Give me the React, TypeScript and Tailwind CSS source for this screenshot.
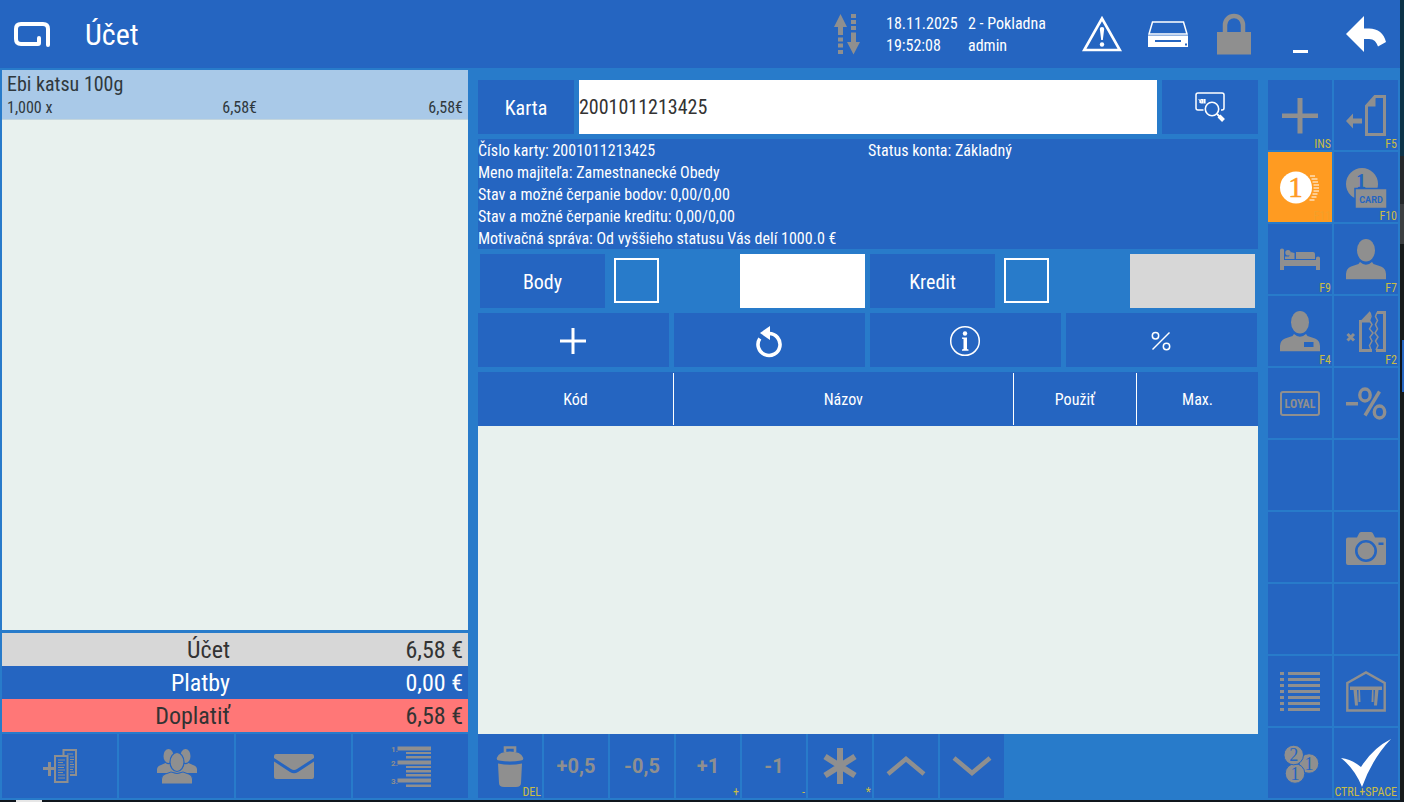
import React, { useState } from "react";
import clsx from "clsx";

const SERIF = "'Liberation Serif', serif";
const SANS = "Roboto, sans-serif";
const CONDENSED = "'Roboto Condensed', Roboto, sans-serif";
const PANEL = "#2565c1";

type IconProps = {
  w?: number;
  h?: number;
  children: React.ReactNode;
};

const Icon = ({ w = 40, h = 40, children }: IconProps) => (
  <svg
    width={w}
    height={h}
    viewBox={`0 0 ${w} ${h}`}
    fill="currentColor"
    className="shrink-0 overflow-visible"
    aria-hidden="true"
  >
    {children}
  </svg>
);

/* ---------- header icons ---------- */

const LogoIcon = () => (
  <Icon w={36} h={25}>
    <path
      d="M34 23V7q0-5-5-5H7Q2 2 2 7v10q0 5 5 5h17q1 0 1-1v-5"
      fill="none"
      stroke="currentColor"
      strokeWidth="4"
      strokeLinecap="round"
      strokeLinejoin="round"
    />
  </Icon>
);

const TransferIcon = () => (
  <Icon w={26} h={41}>
    <path d="M6.500 0 13 13H9v8H4v-8H0zM4 23.500h5v4H4zM4 29.500h5v4H4zM4 36h5v4H4z" />
    <path d="M17 0h5v4h-5zM17 6h5v4h-5zM17 12h5v4h-5zM17 18.500h5V28h4l-6.500 12.500L13 28h4z" />
  </Icon>
);

const WarningIcon = () => (
  <Icon w={40} h={36}>
    <path d="M20 2.500 37.800 34H2.200z" fill="none" stroke="currentColor" strokeWidth="2.600" />
    <path d="M17.800 13q0-2 2.200-2t2.200 2L20.800 24h-1.600z" />
    <circle cx="20" cy="28.500" r="2.200" />
  </Icon>
);

const DriveIcon = () => (
  <Icon w={40} h={26}>
    <path d="M4.500 1h31L39 13H1z" fill="none" stroke="currentColor" strokeWidth="1.500" />
    <path d="M0 14.500h40V26H0z" />
    <path d="M7 20h26" stroke={PANEL} strokeWidth="2" />
    <path d="M37 22.500h2v2h-2z" fill={PANEL} />
  </Icon>
);

const LockIcon = () => (
  <Icon w={34} h={41}>
    <path d="M0 18h34v22.500H0z" />
    <path d="M8 19v-8a9 9 0 0 1 18 0v8" fill="none" stroke="currentColor" strokeWidth="4.500" />
  </Icon>
);

const MinimizeIcon = () => (
  <Icon w={16} h={36}>
    <path d="M1 34h15v3H1z" />
  </Icon>
);

const BackIcon = () => (
  <Icon w={40} h={36}>
    <path d="M0 18 18 0v12.500h5c9 0 15 5 17 13.500l-8 4.500c-1.500-4.500-4-7.500-9-7.500h-5V36z" />
  </Icon>
);

/* ---------- right column icons ---------- */

const PlusIcon = () => (
  <Icon>
    <path d="M17.500 3h5v15.500H38v4.500H22.500v15.500h-5V23H2v-4.500h15.500z" />
  </Icon>
);

const DocBackIcon = () => (
  <Icon>
    <path d="M0 26l7-7.500v5h9v5H7v5z" />
    <path d="M20.500 11 29 1.500h9.500v38h-18z" fill="none" stroke="currentColor" strokeWidth="3" />
    <path d="M19 11.500 29.500 0v11.500z" />
  </Icon>
);

const CoinIcon = () => (
  <Icon>
    <circle cx="16" cy="20.500" r="16" />
    <text x="15.500" y="30" fontSize="29" fontFamily={SERIF} textAnchor="middle" fill="#ff9b21" stroke="#ff9b21" strokeWidth="0.600">
      1
    </text>
    <path
      d="M30 9h5M31.500 12h6M32.500 15h5.500M33.500 18h5.500M33.500 21h5.500M33.500 24h5.500M32.500 27h5M31.500 30h5M29.500 33h5"
      stroke="currentColor"
      strokeWidth="1"
    />
  </Icon>
);

const CoinCardIcon = () => (
  <Icon>
    <circle cx="16" cy="17" r="16" />
    <text x="15" y="20.500" fontSize="20" fontWeight="700" fontFamily={SERIF} textAnchor="middle" fill={PANEL}>
      1
    </text>
    <path d="M9 21.500h32v20H9z" stroke={PANEL} strokeWidth="1.500" />
    <text x="25" y="35.500" fontSize="9" fontWeight="700" fontFamily={SANS} textAnchor="middle" fill={PANEL}>
      CARD
    </text>
  </Icon>
);

const BedIcon = () => (
  <Icon>
    <path d="M0 11q0-1.500 2-1.500t2 1.500v10h32v-2q0-1.500 2-1.500t2 1.500v12h-4v-4H4v4H0z" />
    <circle cx="8" cy="13.800" r="2.700" />
    <path d="M5 17.500h4l1.500-4.500 4 1v6H5zM16 13h17q2 0 2 2v5H16z" />
  </Icon>
);

const PersonIcon = ({ badge = false }: { badge?: boolean }) => (
  <Icon>
    <ellipse cx="20" cy="11.300" rx="9" ry="11.300" />
    <path d="M0 40.300V35q0-5.500 5-7.500l7.500-2.500 1.500-2q6 5.500 12 0l1.500 2 7.500 2.500q5 2 5 7.500v5.300z" />
    {badge && <path d="M24 31h9.500v5H24z" fill={PANEL} />}
  </Icon>
);

const TornDocIcon = () => (
  <Icon>
    <path d="m1.500 23 6.500 6.500m0-6.500-6.500 6.500" stroke="currentColor" strokeWidth="3" />
    <path
      d="M24 1.500l1 4-1.500 4 2.500 4-2.500 4.500 3.500 4-3 4 2 4-2.500 4.500 1.500 4.500"
      fill="none"
      stroke="currentColor"
      strokeWidth="1.500"
    />
    <path d="M14.500 9v30.500H26" fill="none" stroke="currentColor" strokeWidth="3" />
    <path d="M13 11.500 24 0v11.500z" />
    <path
      d="M31 1.500l-1.500 4 2 4-2 4 2 4.500-2.500 4 3 4-2.500 4 2.500 4.500-2 4.500"
      fill="none"
      stroke="currentColor"
      strokeWidth="1.500"
    />
    <path d="M31 1.500h7.500v38H30" fill="none" stroke="currentColor" strokeWidth="3" />
  </Icon>
);

const LoyalIcon = () => (
  <Icon>
    <rect x="1" y="9" width="38" height="23" rx="2" fill="none" stroke="currentColor" strokeWidth="2" />
    <text x="20" y="25" fontSize="12" fontWeight="700" fontFamily={CONDENSED} textAnchor="middle">
      LOYAL
    </text>
  </Icon>
);

const DiscountIcon = () => (
  <Icon>
    <path d="M0 19h12v3.500H0z" />
    <g fill="none" stroke="currentColor" strokeWidth="3.400">
      <ellipse cx="19" cy="12" rx="5.200" ry="6" />
      <ellipse cx="33.500" cy="29" rx="5.200" ry="6" />
      <path d="M19 32.500 33.500 8.500" />
    </g>
  </Icon>
);

const CameraIcon = () => (
  <Icon>
    <path d="M2 10.500h9l2-4Q13.500 5 15 5h10q1.500 0 2 1.500l2 4h9q2 0 2 2V36q0 2-2 2H2q-2 0-2-2V12.500q0-2 2-2z" />
    <circle cx="20" cy="24" r="9.700" fill="none" stroke={PANEL} strokeWidth="2.600" />
    <path d="M32.500 15.500h5V18h-5z" fill={PANEL} />
  </Icon>
);

const ListIcon = () => (
  <Icon>
    {[1, 7, 13, 19, 25, 31, 37].map((y) => (
      <path key={y} d={`M0 ${y}h4v3H0zM8 ${y}h32v3H8z`} />
    ))}
  </Icon>
);

const HouseTableIcon = () => (
  <Icon>
    <path d="M1.300 12 20 1.500 38.700 12v27.500H1.300z" fill="none" stroke="currentColor" strokeWidth="2.400" />
    <path d="M4 15.500h32v3.500H4zM7.500 19h3.500l1 15.500H9zM12.500 19h1.500l.5 12h-2zM32.500 19H29l-1 15.500h3zM27.500 19H26l-.5 12h2z" />
  </Icon>
);

const CoinsIcon = () => (
  <Icon>
    {[
      { n: 1, x: 29, y: 20.500 },
      { n: 1, x: 15, y: 30.500 },
      { n: 2, x: 13.700, y: 12 },
    ].map(({ n, x, y }) => (
      <g key={`${x}`}>
        <circle cx={x} cy={y} r="9.800" stroke={PANEL} strokeWidth="1" />
        <text x={x} y={y + 6} fontSize="18" fontFamily={SERIF} textAnchor="middle" fill={PANEL}>
          {n}
        </text>
      </g>
    ))}
  </Icon>
);

const CheckIcon = () => (
  <Icon w={50} h={48}>
    <path d="M0 19q11 1.500 20 9Q32 9 50 0 31 20 21 48 14 30 0 19z" />
  </Icon>
);

/* ---------- bottom bar icons ---------- */

const AddDocsIcon = () => (
  <Icon w={34} h={34}>
    <path d="M0 18h5v-5h3v5h5v3H8v6H5v-6H0z" />
    <g fill="none" stroke="currentColor">
      <path d="M20.500 6V1h12.500v25h-6" strokeWidth="2" />
      <path d="M12 7h12.500v26H12z" strokeWidth="2" />
      <path
        d="M15 11h7M15 13.500h5M15 16h7M15 18.500h6M15 21h7M15 23.500h5M15 26h7M15 29h7M24 5h6M27 8h4M27 10.500h4M27 13h3M27 15.500h4M27 18h4M27 20.500h3M27 23h4"
        strokeWidth="1"
      />
    </g>
  </Icon>
);

const GroupIcon = () => (
  <Icon w={40} h={35}>
    <ellipse cx="11.500" cy="7" rx="5" ry="7" />
    <ellipse cx="28.500" cy="7" rx="5" ry="7" />
    <path d="M0 24v-3.500q0-3.500 4-4.500l4.500-2q3 2.500 6 0h11q3 2.500 6 0l4.500 2q4 1 4 4.500V24z" />
    <path
      d="M4.500 35v-5q0-4 4-5l5.500-2q6 3 12 0l5.500 2q4 1 4 5v5z"
      stroke={PANEL}
      strokeWidth="1"
    />
    <ellipse cx="20" cy="13" rx="7" ry="9.500" stroke={PANEL} strokeWidth="1.200" />
  </Icon>
);

const MailIcon = () => (
  <Icon w={40} h={25}>
    <path d="M2 0h36q2 0 2 2v2L23 15q-3 2-6 0L0 4V2q0-2 2-2z" />
    <path d="M0 7.500 16 18q4 2.500 8 0L40 7.500V23q0 2-2 2H2q-2 0-2-2z" />
  </Icon>
);

const NumberedListIcon = () => (
  <Icon w={40} h={41}>
    <path d="M6.500.5H40v4H6.500zM15 6h25v2H15zM15 10h25v2.500H15zM6.500 14.500H40v4H6.500zM15 20h25v2H15zM15 24h25v2.500H15zM15 28h25v2.500H15zM6.500 32.500H40v4H6.500zM15 38.500h25V41H15z" />
    <g fontSize="8" fontWeight="700" fontFamily={SANS}>
      <text x="0" y="6">1.</text>
      <text x="0" y="20">2.</text>
      <text x="0" y="38">3.</text>
    </g>
  </Icon>
);

const TrashIcon = () => (
  <Icon w={28} h={41}>
    <path d="M9 6V1.500h10V6" fill="none" stroke="currentColor" strokeWidth="2.600" />
    <path d="M1 11.500Q3 5.500 14 5.500t13 6q1 2.500-2 3-11 2-22 0-3-.5-2-3zM2 17.500q12 2.500 24 0L25 37q0 4-5 4H8q-5 0-5-4z" />
  </Icon>
);

const AsteriskIcon = () => (
  <Icon w={34} h={36}>
    <path d="M17 0v36M2 8.500l30 19M32 8.500l-30 19" stroke="currentColor" strokeWidth="6" />
  </Icon>
);

const ChevronIcon = ({ down = false }: { down?: boolean }) => (
  <Icon w={40} h={20}>
    <path
      d={down ? "M2 2l18 15L38 2" : "M2 18 20 3l18 15"}
      fill="none"
      stroke="currentColor"
      strokeWidth="4.500"
    />
  </Icon>
);

/* ---------- loyalty panel icons ---------- */

const CardSearchIcon = () => (
  <Icon w={30} h={30}>
    <g fill="none" stroke="currentColor">
      <path d="M8.500 18H3q-2 0-2-2V3q0-2 2-2h24q2 0 2 2v13q0 2-2 2h-1" strokeWidth="1.500" />
      <circle cx="17" cy="17" r="6.700" strokeWidth="1.600" />
      <path d="M3.500 7.500q1.500 0 1.500 2v1.500M6 7.500h1.500V11H6zM9 7.500h1V11H9z" strokeWidth="1.200" />
      <path d="m22 22 3 3" strokeWidth="2" />
      <path d="m24 24 4.500 4.500" strokeWidth="4" />
    </g>
  </Icon>
);

const AddIcon = () => (
  <Icon w={28} h={26}>
    <path d="M11.500 0h3v11.500H26v3H14.500V26h-3V14.500H0v-3h11.500z" />
  </Icon>
);

const ResetIcon = () => (
  <Icon w={28} h={30}>
    <path d="M3.800 12.500A11 11 0 1 0 13 7.500" fill="none" stroke="currentColor" strokeWidth="3.600" />
    <path d="M14 0v14L4 7z" />
  </Icon>
);

const InfoIcon = () => (
  <Icon w={32} h={30}>
    <circle cx="15" cy="15" r="14.300" fill="none" stroke="currentColor" strokeWidth="1.500" />
    <circle cx="15" cy="7.500" r="2.200" />
    <path d="M12 11.500h5V23l1.500.5v1.200h-6.500v-1.200l1.500-.5V13l-1.500-.3z" />
  </Icon>
);

const PercentIcon = () => (
  <Icon w={22} h={20}>
    <g fill="none" stroke="currentColor" strokeWidth="1.500">
      <circle cx="4.500" cy="4.800" r="3.200" />
      <circle cx="15.500" cy="15.500" r="3.200" />
      <path d="M1.500 18.500 18.500 1.500" />
    </g>
  </Icon>
);

/* ---------- building blocks ---------- */

type TileProps = {
  label: string;
  hotkey?: string;
  variant?: "muted" | "active" | "bright";
  className?: string;
  children?: React.ReactNode;
};

const Tile = ({ label, hotkey, variant = "muted", className, children }: TileProps) => (
  <button
    type="button"
    aria-label={label}
    className={clsx(
      "relative flex items-center justify-center",
      variant === "muted" && "bg-[#2565c1] text-[#8f8f8f]",
      variant === "active" && "bg-[#ff9b21] text-white",
      variant === "bright" && "bg-[#2565c1] text-white",
      className
    )}
  >
    {children}
    {hotkey && (
      <span
        className={clsx(
          "absolute right-px bottom-0 font-['Roboto_Condensed',Roboto,sans-serif] text-xs leading-3 font-normal",
          variant === "active" ? "text-[#f3a02a]" : "text-[#c9bc45]"
        )}
      >
        {hotkey}
      </span>
    )}
  </button>
);

const sideTiles: TileProps[] = [
  { label: "Pridať", hotkey: "INS", children: <PlusIcon /> },
  { label: "Vrátiť doklad", hotkey: "F5", children: <DocBackIcon /> },
  { label: "Hotovosť", hotkey: "F11", variant: "active", children: <CoinIcon /> },
  { label: "Platba kartou", hotkey: "F10", children: <CoinCardIcon /> },
  { label: "Izba", hotkey: "F9", children: <BedIcon /> },
  { label: "Zákazník", hotkey: "F7", children: <PersonIcon /> },
  { label: "Zamestnanec", hotkey: "F4", children: <PersonIcon badge /> },
  { label: "Storno dokladu", hotkey: "F2", children: <TornDocIcon /> },
  { label: "Vernostný systém", children: <LoyalIcon /> },
  { label: "Zľava", children: <DiscountIcon /> },
  { label: "Voľné 1" },
  { label: "Voľné 2" },
  { label: "Voľné 3" },
  { label: "Kamera", children: <CameraIcon /> },
  { label: "Voľné 4" },
  { label: "Voľné 5" },
  { label: "Zoznam", children: <ListIcon /> },
  { label: "Stoly", children: <HouseTableIcon /> },
  { label: "Mince", children: <CoinsIcon /> },
  { label: "Potvrdiť", hotkey: "CTRL+SPACE", variant: "bright", children: <CheckIcon /> },
];

const editTiles: TileProps[] = [
  { label: "Vymazať", hotkey: "DEL", children: <TrashIcon /> },
  { label: "+0,5", children: "+0,5" },
  { label: "-0,5", children: "-0,5" },
  { label: "+1", hotkey: "+", children: "+1" },
  { label: "-1", hotkey: "-", children: "-1" },
  { label: "Množstvo", hotkey: "*", children: <AsteriskIcon /> },
  { label: "Hore", children: <ChevronIcon /> },
  { label: "Dole", children: <ChevronIcon down /> },
];

const totals = [
  { name: "Účet", value: "6,58 €", style: "bg-[#d7d7d7] text-[#333333]" },
  { name: "Platby", value: "0,00 €", style: "bg-[#2565c1] text-white" },
  { name: "Doplatiť", value: "6,58 €", style: "bg-[#ff7777] text-[#333333]" },
];

const Header = () => (
  <header className="flex h-[68px] items-center justify-between bg-[#2565c1] pr-0.5 pl-3.5 text-white">
    <div className="flex items-center gap-[35px]">
      <LogoIcon />
      <h1 className="pt-0.5 text-3xl leading-9">Účet</h1>
    </div>
    <div className="flex items-center">
      <span className="mr-[26px] text-[#8f8f8f]">
        <TransferIcon />
      </span>
      <div className="w-[82px] pt-0.5 text-base leading-[22px]">
        <p>18.11.2025</p>
        <p>19:52:08</p>
      </div>
      <div className="w-[102px] pt-0.5 text-base leading-[22px]">
        <p>2 - Pokladna</p>
        <p>admin</p>
      </div>
      <div className="flex gap-0.5">
        <Tile label="Upozornenia" variant="bright" className="h-16 w-16"><WarningIcon /></Tile>
        <Tile label="Zásuvka" variant="bright" className="h-16 w-16"><DriveIcon /></Tile>
        <Tile label="Zamknúť" className="h-16 w-16"><LockIcon /></Tile>
        <Tile label="Minimalizovať" variant="bright" className="h-16 w-16"><MinimizeIcon /></Tile>
        <Tile label="Späť" variant="bright" className="h-16 w-16"><BackIcon /></Tile>
      </div>
    </div>
  </header>
);

const Receipt = () => (
  <section className="flex flex-col pt-0.5">
    <div className="flex-1 bg-[#e8f1ee] text-[#2f383d]">
      <div className="border-b border-[#c3d5dd] bg-[#a9c9e8] px-[5px] pt-0.5">
        <p className="text-xl leading-6">Ebi katsu 100g</p>
        <div className="grid grid-cols-[250fr_206fr] pt-px text-base leading-[22px]">
          <div className="flex justify-between">
            <span>1,000 x</span>
            <span>6,58€</span>
          </div>
          <span className="text-right">6,58€</span>
        </div>
      </div>
    </div>
    <dl className="mt-[3px] text-2xl leading-[31px]">
      {totals.map((row) => (
        <div key={row.name} className={clsx("grid grid-cols-2 pt-0.5 text-right", row.style)}>
          <dt className="pr-[5px]">{row.name}</dt>
          <dd className="pr-[5px]">{row.value}</dd>
        </div>
      ))}
    </dl>
    <div className="mt-0.5 grid h-16 grid-cols-4 gap-0.5">
      <Tile label="Pridať doklad"><AddDocsIcon /></Tile>
      <Tile label="Skupina"><GroupIcon /></Tile>
      <Tile label="Poslať e-mailom"><MailIcon /></Tile>
      <Tile label="Chody"><NumberedListIcon /></Tile>
    </div>
  </section>
);

type PointsProps = {
  id: string;
  name: string;
  disabled?: boolean;
};

const PointsFields = ({ id, name, disabled }: PointsProps) => {
  const [checked, setChecked] = useState(false);

  return (
    <>
      <label htmlFor={id} className="flex items-center justify-center bg-[#2565c1] pt-0.5 text-xl">
        {name}
      </label>
      <div className="pt-1 pl-1">
        <input
          id={id}
          type="checkbox"
          checked={checked}
          onChange={(e) => setChecked(e.target.checked)}
          className="block h-[45px] w-[45px] appearance-none border-2 border-white checked:bg-white"
        />
      </div>
      <input
        type="text"
        aria-label={`${name} - hodnota`}
        disabled={disabled}
        className="w-full bg-white px-1 text-xl text-[#333333] disabled:bg-[#d7d7d7]"
      />
    </>
  );
};

const LoyaltyPanel = () => {
  const [card, setCard] = useState("2001011213425");

  return (
    <section className="flex flex-col pt-3 text-white">
      <div className="flex flex-1 flex-col gap-[5px]">
        <div className="flex h-[54px] gap-[5px]">
          <label htmlFor="card" className="flex w-24 items-center justify-center bg-[#2565c1] pt-0.5 text-xl">
            Karta
          </label>
          <input
            id="card"
            type="text"
            value={card}
            onChange={(e) => setCard(e.target.value)}
            className="min-w-0 flex-1 bg-white text-xl text-[#333333] outline-none"
          />
          <Tile label="Hľadať kartu" variant="bright" className="w-24"><CardSearchIcon /></Tile>
        </div>

        <div className="h-[110px] bg-[#2565c1] pt-px text-base leading-[22px]">
          <div className="grid grid-cols-2">
            <p>Číslo karty: 2001011213425</p>
            <p>Status konta: Základný</p>
          </div>
          <p>Meno majiteľa: Zamestnanecké Obedy</p>
          <p>Stav a možné čerpanie bodov: 0,00/0,00</p>
          <p>Stav a možné čerpanie kreditu: 0,00/0,00</p>
          <p>Motivačná správa: Od vyššieho statusu Vás delí 1000.0 €</p>
        </div>

        <div className="mr-[3px] ml-0.5 grid h-[54px] grid-cols-6 gap-[5px]">
          <PointsFields id="points" name="Body" />
          <PointsFields id="credit" name="Kredit" disabled />
        </div>

        <div className="mr-px grid h-[54px] grid-cols-4 gap-[5px]">
          <Tile label="Pridať" variant="bright" className="pt-0.5"><AddIcon /></Tile>
          <Tile label="Obnoviť" variant="bright" className="pt-0.5"><ResetIcon /></Tile>
          <Tile label="Informácie" variant="bright" className="pt-0.5"><InfoIcon /></Tile>
          <Tile label="Percentá" variant="bright" className="pt-0.5"><PercentIcon /></Tile>
        </div>

        <div className="flex-1 bg-[#e8f1ee]">
          <table className="w-full table-fixed border-collapse bg-[#2565c1]">
            <thead>
              <tr className="h-[54px] text-base">
                <th className="w-[25.1%] p-0 py-px font-normal">
                  <div className="flex h-[52px] items-center justify-center border-r border-white pt-0.5">Kód</div>
                </th>
                <th className="p-0 py-px font-normal">
                  <div className="flex h-[52px] items-center justify-center border-r border-white pt-0.5">Názov</div>
                </th>
                <th className="w-[15.8%] p-0 py-px font-normal">
                  <div className="flex h-[52px] items-center justify-center border-r border-white pt-0.5">Použiť</div>
                </th>
                <th className="w-[15.5%] p-0 py-px font-normal">
                  <div className="flex h-[52px] items-center justify-center pt-0.5">Max.</div>
                </th>
              </tr>
            </thead>
          </table>
        </div>
      </div>

      <div className="flex h-16 gap-0.5 text-xl font-bold">
        {editTiles.map((tile) => (
          <Tile key={tile.label} {...tile} className="w-16 font-[Roboto,sans-serif]" />
        ))}
      </div>
    </section>
  );
};

const App = () => {
  return (
    <div className="flex min-h-screen flex-col bg-[#10161d] font-['Roboto_Condensed','Liberation_Sans_Narrow',Roboto,sans-serif]">
      <div className="flex flex-1">
        <div className="flex flex-1 flex-col bg-[#287bca]">
          <Header />
          <main className="grid flex-1 grid-cols-[466fr_780fr_130fr] gap-x-2.5 px-0.5 pb-0.5">
            <Receipt />
            <LoyaltyPanel />
            <aside className="grid auto-rows-fr grid-cols-2 gap-0.5 pt-3">
              {sideTiles.map((tile) => (
                <Tile key={tile.label} {...tile} />
              ))}
            </aside>
          </main>
        </div>
        {/* desktop showing past the window edge */}
        <div className="flex w-1 flex-col">
          <div className="h-39 bg-[#0d3348]" />
          <div className="h-12 bg-[#26282a]" />
          <div className="h-10 bg-[#3c3e40]" />
          <div className="h-24 bg-[#171a1a]" />
          <div className="ml-0.5 h-13 bg-[#2565c1]" />
          <div className="flex-1 bg-[#171a1a]" />
        </div>
      </div>
      <div className="flex h-0.5">
        <div className="ml-4 w-6.5 bg-[#e6e6e6]" />
      </div>
    </div>
  );
};

export default App;
